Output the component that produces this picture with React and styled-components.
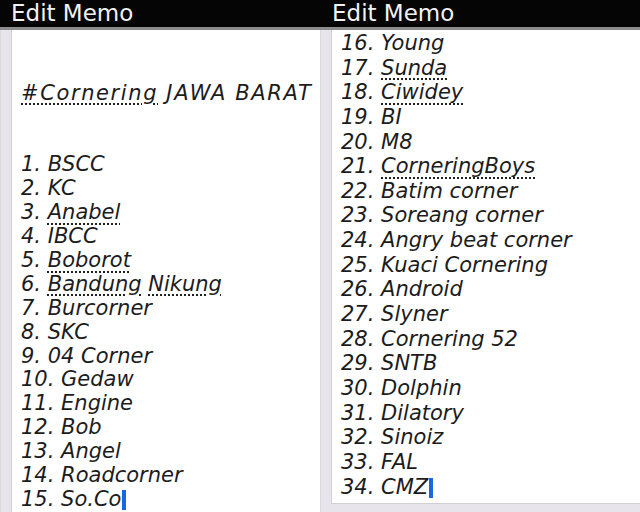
import styled, { createGlobalStyle } from "styled-components";

const Global = createGlobalStyle`
  html, body {
    margin: 0;
    padding: 0;
    background: #e8e4ec;
  }
`;

const Page = styled.div`
  width: 640px;
  height: 512px;
  display: flex;
  overflow: hidden;
`;

const Screen = styled.div`
  width: 320px;
  height: 512px;
  display: flex;
  flex-direction: column;
  overflow: hidden;
`;

const TitleBar = styled.div`
  height: 27px;
  flex-shrink: 0;
  background: #050505;
  border-bottom: 3px solid #8c8c8c;
  color: #f2f2f2;
  font-family: "DejaVu Sans", sans-serif;
  font-size: 23px;
  line-height: 26px;
  padding-left: ${(p) => p.$indent}px;
  white-space: nowrap;
`;

const Backdrop = styled.div`
  flex: 1;
  min-height: 0;
  background: #e8e4ec;
  display: flex;
  padding: 0 0 ${(p) => p.$bottom}px 10px;
  border-left: 1px solid #dcd8e0;
  box-sizing: border-box;
`;

const Memo = styled.div`
  flex: 1;
  background: #ffffff;
  border-left: 1px solid #d4d0d8;
  border-bottom: ${(p) => (p.$closed ? "1px solid #d4d0d8" : "none")};
  padding: ${(p) => p.$top}px 0 0 9px;
  overflow: hidden;
  font-family: "DejaVu Sans", sans-serif;
  font-style: italic;
  font-size: 21px;
  line-height: ${(p) => p.$lh}px;
  color: #1c1c1c;
  white-space: nowrap;
`;

const Line = styled.div`
  height: ${(p) => p.$lh}px;
  letter-spacing: ${(p) => (p.$wide ? "1.6px" : "normal")};
`;

const Misspelt = styled.span`
  text-decoration: underline dotted #202020;
  text-decoration-thickness: 1.5px;
  text-underline-offset: 4px;
`;

const Caret = styled.span`
  display: inline-block;
  width: 4px;
  height: 20px;
  background: #1a66e0;
  vertical-align: -4px;
  margin-left: 1px;
`;

const renderText = (text) =>
  text.split(/(\{[^}]+\})/).map((part, i) =>
    part.startsWith("{") ? (
      <Misspelt key={i}>{part.slice(1, -1)}</Misspelt>
    ) : (
      part
    )
  );

const leftLines = [
  "",
  "",
  "^{#Cornering} JAWA BARAT",
  "",
  "",
  "1. BSCC",
  "2. KC",
  "3. {Anabel}",
  "4. IBCC",
  "5. {Boborot}",
  "6. {Bandung} {Nikung}",
  "7. Burcorner",
  "8. SKC",
  "9. 04 Corner",
  "10. Gedaw",
  "11. Engine",
  "12. Bob",
  "13. Angel",
  "14. Roadcorner",
  "15. So.Co|",
];

const rightLines = [
  "16. Young",
  "17. {Sunda}",
  "18. {Ciwidey}",
  "19. BI",
  "20. M8",
  "21. {CorneringBoys}",
  "22. Batim corner",
  "23. Soreang corner",
  "24. Angry beat corner",
  "25. Kuaci Cornering",
  "26. Android",
  "27. Slyner",
  "28. Cornering 52",
  "29. SNTB",
  "30. Dolphin",
  "31. Dilatory",
  "32. Sinoiz",
  "33. FAL",
  "34. CMZ|",
];

const MemoScreen = ({ lines, lh, top, indent, bottom, closed }) => (
  <Screen>
    <TitleBar $indent={indent}>Edit Memo</TitleBar>
    <Backdrop $bottom={bottom}>
      <Memo $lh={lh} $top={top} $closed={closed}>
        {lines.map((l, i) => {
          const wide = l.startsWith("^");
          const caret = l.endsWith("|");
          let text = wide ? l.slice(1) : l;
          text = caret ? text.slice(0, -1) : text;
          return (
            <Line key={i} $lh={lh} $wide={wide}>
              {renderText(text)}
              {caret && <Caret />}
            </Line>
          );
        })}
      </Memo>
    </Backdrop>
  </Screen>
);

export default function App() {
  return (
    <Page>
      <Global />
      <MemoScreen lines={leftLines} lh={23.9} top={4} indent={11} bottom={0} />
      <MemoScreen lines={rightLines} lh={24.65} top={1} indent={12} bottom={8} closed />
    </Page>
  );
}
